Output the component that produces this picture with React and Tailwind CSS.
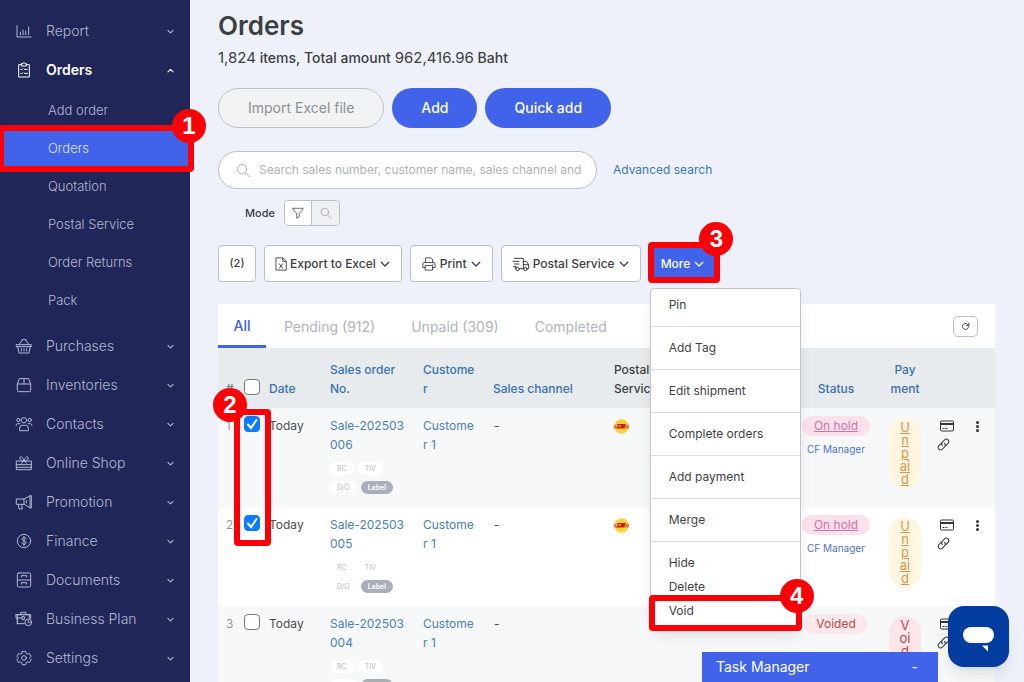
import React, { useState } from 'react'
import { clsx } from 'clsx'

const icons = {
  report: <path d="M1.500 4v17h21M6.500 17.500v-4M10.500 17.500v-7M14.500 17.500V12M19 17.500V6" />,
  orders: (
    <>
      <path d="M8.500 4H4v18.500h16V4h-4.500" />
      <path d="M8.500 2.500h2a1.500 1.500 0 0 1 3 0h2V6h-7zM7 11l1 1 2-2M12.500 11H17M7 17l1 1 2-2M12.500 17H17" />
    </>
  ),
  purchases: (
    <path d="M1 10h22v3H1zM2.500 13l2 9.500h15l2-9.500M8 16v3.500M12 16v3.500M16 16v3.500M4.500 10 10 2.500M19.500 10 14 2.500M9 2.500h6" />
  ),
  inventories: <path d="M2 10.500 5 2.500h14l3 8V20a2 2 0 0 1-2 2H4a2 2 0 0 1-2-2zM2 10.500h20M12 2.500v8" />,
  contacts: (
    <>
      <circle cx="12" cy="6.500" r="4" />
      <circle cx="3.500" cy="6" r="2.500" />
      <circle cx="20.500" cy="6" r="2.500" />
      <path d="M5.500 21.500V18a4 4 0 0 1 4-4h5a4 4 0 0 1 4 4v3.500zM0 14.500c0-2 1-3 3-3h3M24 14.500c0-2-1-3-3-3h-3" />
    </>
  ),
  shop: (
    <path d="M1 9h22v13H1zM1 14.500h22M1 18.500h22M12 9C8 9 5.500 7 5.500 4.500c0-3 5-3 6.500 4.500 1.500-7.500 6.500-7.500 6.500-4.500C18.500 7 16 9 12 9zM12 9l-4 3.500M12 9l4 3.500" />
  ),
  promotion: (
    <path d="M1 7.500h11v8H1zM12 7.500 21 3v17.500l-9-5M3.500 15.500l1 7h5l-1-7M21 2.500h2v18.500h-2M15.500 10v3.500" />
  ),
  finance: (
    <>
      <circle cx="12" cy="12" r="10" />
      <path d="M15 9c0-1.500-1.500-2-3-2s-3 .700-3 2.300c0 3.400 6 1.900 6 5.200 0 1.700-1.500 2.500-3 2.500s-3-.700-3-2.300M12 5v14" />
    </>
  ),
  documents: (
    <path d="M4 1.500h16a2 2 0 0 1 2 2v17a2 2 0 0 1-2 2H4a2 2 0 0 1-2-2v-17a2 2 0 0 1 2-2zM2 12h20M8 7.500V5.500h8v2M8 18v-2h8v2" />
  ),
  business: (
    <>
      <path d="M12.500 19H2V5.500h18V11M7 5.500V2h8v3.500M0 5.500h22v5.500M0 5.500v5h9M9 9v4h3.500V9zM2 10.500V19" />
      <circle cx="18.500" cy="17" r="5" />
      <path d="M18.500 14v3h3" />
    </>
  ),
  settings: (
    <>
      <circle cx="12" cy="12" r="3.500" />
      <path d="M9.500 2h5l.8 3 2 1.100 3-.800 2.400 4.200-2.100 2.200v.600l2.100 2.200-2.400 4.200-3-.800-2 1.100-.8 3h-5l-.8-3-2-1.100-3 .800-2.400-4.200 2.100-2.200v-.600L1.300 9.500l2.400-4.200 3 .800 2-1.100z" />
    </>
  ),
  search: <path d="M17 10a7.500 7.500 0 1 1-15 0 7.500 7.500 0 0 1 15 0zM15 15.500l7.500 7.500" />,
  filter: <path d="M2 2.500h20v2L14.500 13v6.500l-5 3V13L2 4.500z" />,
  excel: <path d="M4 1.500h11l6 6v15H4zM15 1.500v6h6M9 11.500l6 8M15 11.500l-6 8" />,
  print: (
    <path d="M6 9V1.500h9.500L18 4v5M6 18H1.500v-6.500a2 2 0 0 1 2-2h17a2 2 0 0 1 2 2V18H18M6 14.500h12v8H6zM18.500 12.500h.5" />
  ),
  truck: (
    <>
      <path d="M2 3.500h13.500V19M15.500 8h4.500l3.500 5v6h-2M15.500 13h8M15.500 19H10M0 8h9M2 12h7M1 16h4M3.500 16v3" />
      <circle cx="7" cy="19.500" r="2.500" />
      <circle cx="18.500" cy="19.500" r="2.500" />
    </>
  ),
  refresh: <path d="M20 13a8 8 0 1 1-3-7.500L20.500 9M21 3v6.500h-6.500" />,
  link: (
    <path d="m10 14c-2-2-2-4.500 0-6.500l4-4c2-2 4.500-2 6.500 0s2 4.500 0 6.500l-3.500 3.500M14 10c2 2 2 4.500 0 6.500l-4 4c-2 2-4.500 2-6.500 0s-2-4.500 0-6.500L7 10.500" />
  ),
  down: <path d="m3 8 9 9 9-9" />,
  up: <path d="m3 17 9-9 9 9" />,
}

const Icon = ({ name, size = 16, width = 1.5, className }) => (
  <svg
    viewBox="0 0 24 24"
    width={size}
    height={size}
    fill="none"
    stroke="currentColor"
    strokeWidth={width}
    strokeLinejoin="round"
    strokeLinecap="round"
    aria-hidden="true"
    className={clsx('shrink-0 overflow-visible', className)}
  >
    {icons[name]}
  </svg>
)

const menu = [
  { icon: 'report', label: 'Report' },
  {
    icon: 'orders',
    label: 'Orders',
    children: ['Add order', 'Orders', 'Quotation', 'Postal Service', 'Order Returns', 'Pack'],
  },
  { icon: 'purchases', label: 'Purchases' },
  { icon: 'inventories', label: 'Inventories' },
  { icon: 'contacts', label: 'Contacts' },
  { icon: 'shop', label: 'Online Shop' },
  { icon: 'promotion', label: 'Promotion' },
  { icon: 'finance', label: 'Finance' },
  { icon: 'documents', label: 'Documents' },
  { icon: 'business', label: 'Business Plan' },
  { icon: 'settings', label: 'Settings' },
]

const orders = [
  { id: 1, no: 'Sale-202503006', status: 'On hold', payment: 'Unpaid', courier: true, by: 'CF Manager' },
  { id: 2, no: 'Sale-202503005', status: 'On hold', payment: 'Unpaid', courier: true, by: 'CF Manager' },
  { id: 3, no: 'Sale-202503004', status: 'Voided', payment: 'Voided' },
]

const moreGroups = [
  ['Pin'],
  ['Add Tag'],
  ['Edit shipment'],
  ['Complete orders'],
  ['Add payment'],
  ['Merge'],
  ['Hide', 'Delete', 'Void'],
]

// Red frame with its step number, laid over the element it points at
const Step = ({ n, className, badge = '-top-[22px] -right-[18px]' }) => (
  <span className={clsx('pointer-events-none absolute z-30 rounded-sm border-6 border-[#fb0007]', className)}>
    <span
      className={clsx(
        'absolute flex size-[34px] items-center justify-center rounded-full bg-[#fb0007] font-["Liberation_Sans",sans-serif] text-2xl font-bold text-white',
        badge
      )}
    >
      {n}
    </span>
  </span>
)

const Sidebar = () => (
  <nav className="w-[190px] shrink-0 bg-[#212659] pt-[11px] text-[#b4b8d3]">
    <ul>
      {menu.map((item) => (
        <li key={item.label}>
          <button
            type="button"
            className={clsx(
              'flex h-[39px] w-full items-center px-4 text-left text-sm',
              item.children ? 'font-semibold text-white' : 'font-light'
            )}
          >
            <Icon name={item.icon} />
            <span className="ml-3.5 flex-1">{item.label}</span>
            <Icon name={item.children ? 'up' : 'down'} size={7} width={3.5} className="mt-0.5" />
          </button>
          {item.children && (
            <ul className="mt-[3px] mb-1.5">
              {item.children.map((child) => (
                <li key={child} className="relative">
                  <a
                    href="#"
                    className={clsx(
                      'flex h-[38px] items-center pl-12 text-[13px] font-light',
                      child === 'Orders' && 'bg-[#4163ea] text-[#dfe4fb]'
                    )}
                  >
                    {child}
                  </a>
                  {child === 'Orders' && <Step n={1} className="-top-[5px] -right-1 -bottom-1 -left-0.5" />}
                </li>
              ))}
            </ul>
          )}
        </li>
      ))}
    </ul>
  </nav>
)

const Check = ({ label, ...props }) => (
  <span className="relative inline-grid align-top">
    <input
      type="checkbox"
      aria-label={label}
      className="peer col-start-1 row-start-1 size-4 appearance-none rounded-[4px] border border-[#77797c] bg-white checked:border-[#0a7bff] checked:bg-[#0a7bff]"
      {...props}
    />
    <svg
      viewBox="0 0 16 16"
      fill="none"
      stroke="white"
      strokeWidth="2"
      strokeLinecap="round"
      className="pointer-events-none col-start-1 row-start-1 hidden size-4 peer-checked:block"
    >
      <path d="m4 8.500 3 3.500 5.500-8" />
    </svg>
  </span>
)

const ToolButton = ({ icon, iconSize = 14, iconClass, children }) => (
  <button
    type="button"
    className="flex h-[37px] items-center gap-1 rounded-[4px] border border-[#bcbfc7] bg-white px-[11px] text-xs font-medium whitespace-nowrap text-[#3c3e42]"
  >
    <Icon name={icon} size={iconSize} className={iconClass} />
    {children}
    <Icon name="down" size={10} width={3.2} />
  </button>
)

const MoreMenu = () => (
  <div className="absolute top-full left-px z-20 mt-1.5 w-[151px] rounded-[4px] border border-[#c3c5ca] bg-white py-1 text-xs shadow-lg">
    {moreGroups.map((group, i) => (
      <ul key={group[0]} className={clsx(i > 0 && 'mt-[9px] border-t border-[#dddfe2] pt-[9px]')}>
        {group.map((item) => (
          <li key={item} className="relative">
            <button type="button" className="flex h-6 w-full items-center pl-[18px] text-[#3f4144]">
              {item}
            </button>
            {item === 'Void' && <Step n={4} className="-top-1 -right-0.5 -bottom-2 -left-0.5" />}
          </li>
        ))}
      </ul>
    ))}
  </div>
)

const Courier = () => (
  <svg viewBox="0 0 30 30" className="mt-[3px] size-[15px]" role="img" aria-label="DHL">
    <circle cx="15" cy="15" r="14.500" fill="#fdd13a" />
    <path d="M0 13h5l-1 2H0zM24 13h6v2h-6zM0 17h8v1.500H0zM22 17h8v1.500h-8z" fill="#d8261c" />
    <path d="M6 10h18l-3 9H5l2-5h4l-1 2h3l1-3H6z" fill="#c9211a" />
  </svg>
)

const CardIcon = () => (
  <svg viewBox="0 0 14 12" className="h-3 w-3.5" fill="none" stroke="#34363a" aria-hidden="true">
    <rect x="0.5" y="1" width="13" height="10" rx="1" />
    <path d="M0.500 4h13" strokeWidth="2" />
    <path d="M2.500 8.500h2M5.500 8.500h2" />
  </svg>
)

const Doc = ({ children, dark }) => (
  <span
    className={clsx(
      'flex h-[13px] items-center rounded-full px-[7px] text-[7px]',
      dark ? 'bg-[#a9afb8] font-semibold text-white' : 'bg-white text-[#b4b8be]'
    )}
  >
    {children}
  </span>
)

const OrderRow = ({ order }) => {
  const [checked, setChecked] = useState(order.id < 3)
  const voided = order.status === 'Voided'

  return (
    <tr className="h-[99px] align-top leading-[19px] odd:bg-[#f7f8fa]">
      <td className="pt-2 pl-2 font-light text-[#77797c]">{order.id}</td>
      <td className="relative pt-2 pl-px">
        <Check label={`Select ${order.no}`} checked={checked} onChange={() => setChecked(!checked)} />
        {order.id === 1 && <Step n={2} className="top-px -left-[9px] h-[137px] w-[37px]" badge="-top-[27px] -left-[27px]" />}
      </td>
      <td className="pt-2">Today</td>
      <td className="pt-2 pr-3.5">
        <a href="#" className="block break-all text-[#4a80b2]">{order.no}</a>
        <div className="mt-2 flex w-[66px] flex-wrap gap-x-1 gap-y-1.5">
          <Doc>RC</Doc>
          <Doc>TIV</Doc>
          <Doc>D/O</Doc>
          <Doc dark>Label</Doc>
        </div>
      </td>
      <td className="pt-2 pr-4">
        <a href="#" className="block break-all text-[#4a80b2]">Customer 1</a>
      </td>
      <td className="pt-2 pl-px">-</td>
      <td className="pt-2">{order.courier && <Courier />}</td>
      <td className="pt-2 text-center">
        <a
          href="#"
          className={clsx(
            'inline-block h-5 rounded-full px-3 whitespace-nowrap',
            voided ? 'bg-[#fde9ec] text-[#c04549]' : 'bg-[#fce1ed] text-[#cf74a6] underline'
          )}
        >
          {order.status}
        </a>
        {order.by && <a href="#" className="mt-1 block text-[10px] whitespace-nowrap text-[#5072d6]">{order.by}</a>}
      </td>
      <td className="pt-2.5">
        <a
          href="#"
          className={clsx(
            'mx-auto block w-8 rounded-full px-[9px] py-[3px] text-center text-[13px] leading-[13px] break-all',
            voided ? 'bg-[#fde6e9] text-[#c04549]' : 'bg-[#fef6e0] text-[#dd9350] underline'
          )}
        >
          {order.payment}
        </a>
      </td>
      <td className="pt-3">
        <div className="flex flex-col gap-1.5 pl-px text-[#3c3e42]">
          <CardIcon />
          <Icon name="link" size={13} width={2} className="-ml-[3px]" />
        </div>
      </td>
      <td className="pt-[13px]">
        <button type="button" aria-label="Row actions" className="flex flex-col gap-px px-[9px]">
          <span className="size-[3px] rounded-full bg-[#333]" />
          <span className="size-[3px] rounded-full bg-[#333]" />
          <span className="size-[3px] rounded-full bg-[#333]" />
        </button>
      </td>
    </tr>
  )
}

const OrderTable = () => (
  <table className="w-full table-fixed text-left text-xs text-[#4b4d50]">
    <colgroup>
      <col className="w-[25px]" />
      <col className="w-[26px]" />
      <col className="w-[61px]" />
      <col className="w-[93px]" />
      <col className="w-[70px]" />
      <col className="w-[121px]" />
      <col />
      <col className="w-[70px]" />
      <col className="w-[68px]" />
      <col className="w-[28px]" />
      <col className="w-[28px]" />
    </colgroup>
    <thead>
      <tr className="h-[60px] bg-[#e8ebee] align-bottom leading-[19px] text-[#3a72ad] *:pb-2.5 *:font-medium">
        <th className="pl-2 text-[#77797c]">#</th>
        <th className="pl-px"><Check label="Select all" /></th>
        <th>Date</th>
        <th className="pr-3.5">Sales order No.</th>
        <th className="pr-4 break-all">Customer</th>
        <th>Sales channel</th>
        <th className="text-[#3c3e42]">Postal<br />Service</th>
        <th className="text-center">Status</th>
        <th className="text-center">Pay<br />ment</th>
        <th />
        <th />
      </tr>
    </thead>
    <tbody>
      {orders.map((order) => <OrderRow key={order.id} order={order} />)}
    </tbody>
  </table>
)

const App = () => {
  return (
    <div className='flex h-screen overflow-hidden bg-[#eef1fa] font-["Inter","Noto_Sans",sans-serif] text-[#3c3e42]'>
      <Sidebar />
      <main className="min-w-0 flex-1 pr-[29px] pl-7">
        <h1 className="pt-2 text-[26px] leading-9 font-semibold">Orders</h1>
        <p className="mt-1 text-sm leading-5 font-medium">
          <span className="text-[15px] font-normal">1,824</span> items, Total amount{' '}
          <span className="text-[15px] font-normal">962,416.96</span> Baht
        </p>

        <div className="mt-5 flex gap-2 text-sm">
          <button type="button" className="h-10 rounded-full border border-[#bfc2c9] bg-[#f1f3f5] px-[29px] text-[#8d9094]">
            Import Excel file
          </button>
          <button type="button" className="h-10 rounded-full bg-[#4163ea] px-[29px] font-medium text-white">Add</button>
          <button type="button" className="h-10 rounded-full bg-[#4163ea] px-[29px] font-medium text-white">Quick add</button>
        </div>

        <div className="mt-[23px] flex items-center gap-4 text-xs">
          <label className="flex h-[38px] w-[379px] items-center gap-2 rounded-full border border-[#bcbfc7] bg-white px-[11px] pl-[17px] text-[#a3a6ab]">
            <Icon name="search" size={15} width={1.4} />
            <input
              type="text"
              aria-label="Search"
              placeholder="Search sales number, customer name, sales channel and tag"
              className="min-w-0 flex-1 outline-none placeholder:text-[#b0b3b8]"
            />
          </label>
          <a href="#" className="text-[#3879b3]">Advanced search</a>
        </div>

        <div className="mt-[11px] flex items-center gap-[9px] pl-[27px] text-[11px] font-medium">
          Mode
          <div className="flex h-[26px] w-14 overflow-hidden rounded-[4px] border border-[#bcbfc7]">
            <button type="button" aria-label="Filter" className="flex flex-1 items-center justify-center border-r border-[#bcbfc7] bg-white">
              <Icon name="filter" size={12} />
            </button>
            <button type="button" aria-label="Search mode" className="flex flex-1 items-center justify-center bg-[#eff0f3] text-[#9b9ea4]">
              <Icon name="search" size={12} />
            </button>
          </div>
        </div>

        <div className="mt-[19px] flex gap-2">
          <button type="button" className="h-[37px] w-[38px] rounded-[4px] border border-[#bcbfc7] bg-white text-[11px] font-medium">(2)</button>
          <ToolButton icon="excel" iconClass="-mx-0.5">Export to Excel</ToolButton>
          <ToolButton icon="print">Print</ToolButton>
          <ToolButton icon="truck" iconSize={16}>Postal Service</ToolButton>
          <div className="relative">
            <button type="button" className="flex h-[37px] items-center gap-1 rounded-[4px] bg-[#4163ea] pr-[15px] pl-3 text-xs font-medium text-white">
              More <Icon name="down" size={10} width={3.2} />
            </button>
            <Step n={3} className="-inset-x-px -top-[3px] -bottom-px" badge="-top-[26px] -right-[19px]" />
            <MoreMenu />
          </div>
        </div>

        <section className="mt-[22px] bg-white">
          <div className="flex h-11 items-stretch justify-between">
            <div className="flex text-sm text-[#b1b5bb]">
              <button type="button" className="w-12 border-b-3 border-[#4163ea] pt-0.5 font-medium text-[#4163ea]">All</button>
              <button type="button" className="ml-[18px] pt-0.5">Pending (912)</button>
              <button type="button" className="ml-9 pt-0.5">Unpaid (309)</button>
              <button type="button" className="ml-9 pt-0.5">Completed</button>
            </div>
            <button type="button" aria-label="Refresh" className="mt-3 mr-[17px] flex h-[21px] w-[25px] items-center justify-center rounded-[5px] border border-[#bcbfc7]">
              <Icon name="refresh" size={9} width={2.5} />
            </button>
          </div>
          <OrderTable />
        </section>
      </main>

      <div className="fixed right-[86px] bottom-0 z-30 flex h-[30px] w-[236px] items-center justify-between bg-[#4163ea] pr-5 pl-3.5 text-sm text-white">
        Task Manager
        <button type="button" aria-label="Minimize">-</button>
      </div>
      <button type="button" aria-label="Chat" className="fixed right-[15px] bottom-[15px] z-40 size-[61px] rounded-2xl bg-[#023c9e] shadow-lg">
        <svg viewBox="0 0 61 61" fill="white" aria-hidden="true">
          <rect x="15" y="21" width="31" height="16" rx="8" />
          <path d="M34 39.500h6v6z" />
        </svg>
      </button>
    </div>
  )
}

export default App
